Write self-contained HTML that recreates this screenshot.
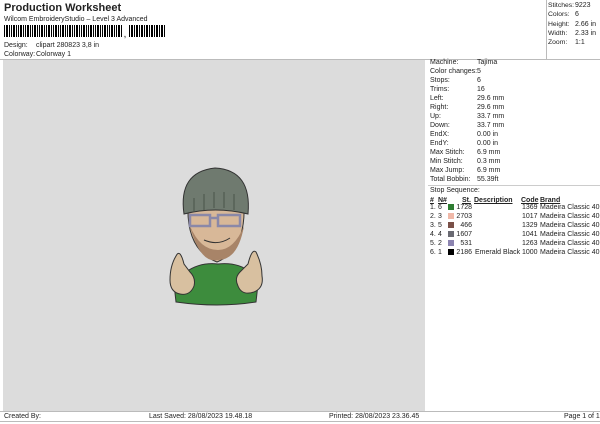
<!DOCTYPE html>
<html><head><meta charset="utf-8"><style>
*{margin:0;padding:0;box-sizing:border-box}
body{width:600px;height:424px;background:#fff;font-family:"Liberation Sans",sans-serif;color:#222;position:relative;overflow:hidden;font-size:7px}
.a{position:absolute;white-space:nowrap;line-height:9px}
.bar{position:absolute;left:4px;top:25px;width:118px;height:12px;background:repeating-linear-gradient(90deg,#000 0 1px,#fff 1px 2px,#000 2px 4px,#fff 4px 5px,#000 5px 6px,#fff 6px 7px)}
.bar2{position:absolute;left:129px;top:25px;width:36px;height:12px;background:repeating-linear-gradient(90deg,#000 0 1px,#fff 1px 2px,#000 2px 4px,#fff 4px 5px)}
.sw{display:inline-block;width:6px;height:6px;vertical-align:-1px}
u{text-decoration:underline}
.r{line-height:9.1px}
</style></head><body>
<div class="a" style="left:4px;top:2px;font-size:11px;font-weight:bold;line-height:12px">Production Worksheet</div>
<div class="a" style="left:4px;top:15px">Wilcom EmbroideryStudio – Level 3 Advanced</div>
<div class="bar"></div><div class="a" style="left:124px;top:31px;font-weight:bold">,</div><div class="bar2"></div>
<div class="a" style="left:4px;top:41px">Design:</div><div class="a" style="left:36px;top:41px">clipart 280823 3,8 in</div>
<div class="a" style="left:4px;top:50px">Colorway:</div><div class="a" style="left:36px;top:50px">Colorway 1</div>
<div style="position:absolute;left:0;top:59px;width:600px;height:1px;background:#bbb"></div>
<div style="position:absolute;left:546px;top:0;width:1px;height:59px;background:#bbb"></div>
<div style="position:absolute;left:3px;top:60px;width:422px;height:351px;background:#dcdcdc"></div>
<div style="position:absolute;left:428px;top:185px;width:172px;height:1px;background:#ccc"></div>
<div style="position:absolute;left:0;top:411px;width:600px;height:1px;background:#bbb"></div>
<div style="position:absolute;left:0;top:421px;width:600px;height:1px;background:#bbb"></div>
<div class="a" style="left:548px;top:1px;line-height:9.3px;font-size:6.8px">Stitches:<br>Colors:<br>Height:<br>Width:<br>Zoom:</div>
<div class="a" style="left:575px;top:1px;line-height:9.3px">9223<br>6<br>2.66 in<br>2.33 in<br>1:1</div>
<div class="a" style="left:430px;top:58px;line-height:9px">Machine:<br>Color changes:<br>Stops:<br>Trims:<br>Left:<br>Right:<br>Up:<br>Down:<br>EndX:<br>EndY:<br>Max Stitch:<br>Min Stitch:<br>Max Jump:<br>Total Bobbin:</div>
<div class="a" style="left:477px;top:58px;line-height:9px">Tajima<br>5<br>6<br>16<br>29.6 mm<br>29.6 mm<br>33.7 mm<br>33.7 mm<br>0.00 in<br>0.00 in<br>6.9 mm<br>0.3 mm<br>6.9 mm<br>55.39ft</div>
<div class="a" style="left:430px;top:186px">Stop Sequence:</div>
<div class="a" style="left:430px;top:196px;font-weight:bold"><u>#</u></div>
<div class="a" style="left:438px;top:196px;font-weight:bold"><u>N#</u></div>
<div class="a" style="left:462px;top:196px;font-weight:bold"><u>St.</u></div>
<div class="a" style="left:474px;top:196px;font-weight:bold"><u>Description</u></div>
<div class="a" style="left:521px;top:196px;font-weight:bold"><u>Code</u></div>
<div class="a" style="left:540px;top:196px;font-weight:bold"><u>Brand</u></div>
<div class="a r" style="left:430px;top:203px">1.<br>2.<br>3.<br>4.<br>5.<br>6.</div>
<div class="a r" style="left:438px;top:203px">6<br>3<br>5<br>4<br>2<br>1</div>
<div class="a r" style="left:448px;top:203px"><span class="sw" style="background:#2e7d32"></span><br><span class="sw" style="background:#f0b8a8"></span><br><span class="sw" style="background:#7a5048"></span><br><span class="sw" style="background:#6a6a72"></span><br><span class="sw" style="background:#8c84b0"></span><br><span class="sw" style="background:#000"></span></div>
<div class="a r" style="left:455px;top:203px;text-align:right;width:17px">1728<br>2703<br>466<br>1607<br>531<br>2186</div>
<div class="a r" style="left:475px;top:203px"><br><br><br><br><br>Emerald Black</div>
<div class="a r" style="left:522px;top:203px">1369<br>1017<br>1329<br>1041<br>1263<br>1000</div>
<div class="a r" style="left:540px;top:203px">Madeira Classic 40<br>Madeira Classic 40<br>Madeira Classic 40<br>Madeira Classic 40<br>Madeira Classic 40<br>Madeira Classic 40</div>
<div class="a" style="left:4px;top:412px">Created By:</div>
<div class="a" style="left:149px;top:412px">Last Saved: 28/08/2023 19.48.18</div>
<div class="a" style="left:329px;top:412px">Printed: 28/08/2023 23.36.45</div>
<div class="a" style="left:564px;top:412px">Page 1 of 1</div>
<svg style="position:absolute;left:160px;top:160px" width="110" height="150" viewBox="0 0 110 150">
<path d="M26 112 Q40 102 58 104 Q78 102 90 112 L98 124 L96 142 Q58 148 16 142 L14 124 Z" fill="#3d8c3d" stroke="#333" stroke-width="1"/>
<path d="M28 44 Q26 90 57 102 Q86 90 84 44 Z" fill="#d8b898" stroke="#333" stroke-width="1"/>
<path d="M30 66 Q40 104 58 100 Q78 100 84 66 Q74 90 58 90 Q40 90 30 66Z" fill="#a88468"/>
<path d="M24 54 Q18 12 55 8 Q92 10 88 54 Q55 46 24 54Z" fill="#6f7a6f" stroke="#333" stroke-width="1"/>
<path d="M34 38 V52 M44 34 V50 M54 32 V48 M64 32 V48 M74 34 V50" stroke="#4a544a" stroke-width="1"/>
<path d="M30 55 h20 v11 h-20z M58 55 h22 v11 h-22z M50 58 h8" fill="none" stroke="#8a88a8" stroke-width="2.5"/>
<path d="M44 80 Q58 86 70 78" stroke="#333" fill="none"/>
<path d="M16 96 Q20 88 24 104 L30 112 Q36 118 34 126 Q30 136 20 134 Q10 132 10 120 Q10 106 16 96Z" fill="#d8c0a0" stroke="#333" stroke-width="1"/>
<path d="M96 92 Q92 88 88 104 L80 112 Q74 118 78 126 Q82 136 94 132 Q104 128 102 116 Q102 104 96 92Z" fill="#d8c0a0" stroke="#333" stroke-width="1"/>
</svg>
</body></html>
